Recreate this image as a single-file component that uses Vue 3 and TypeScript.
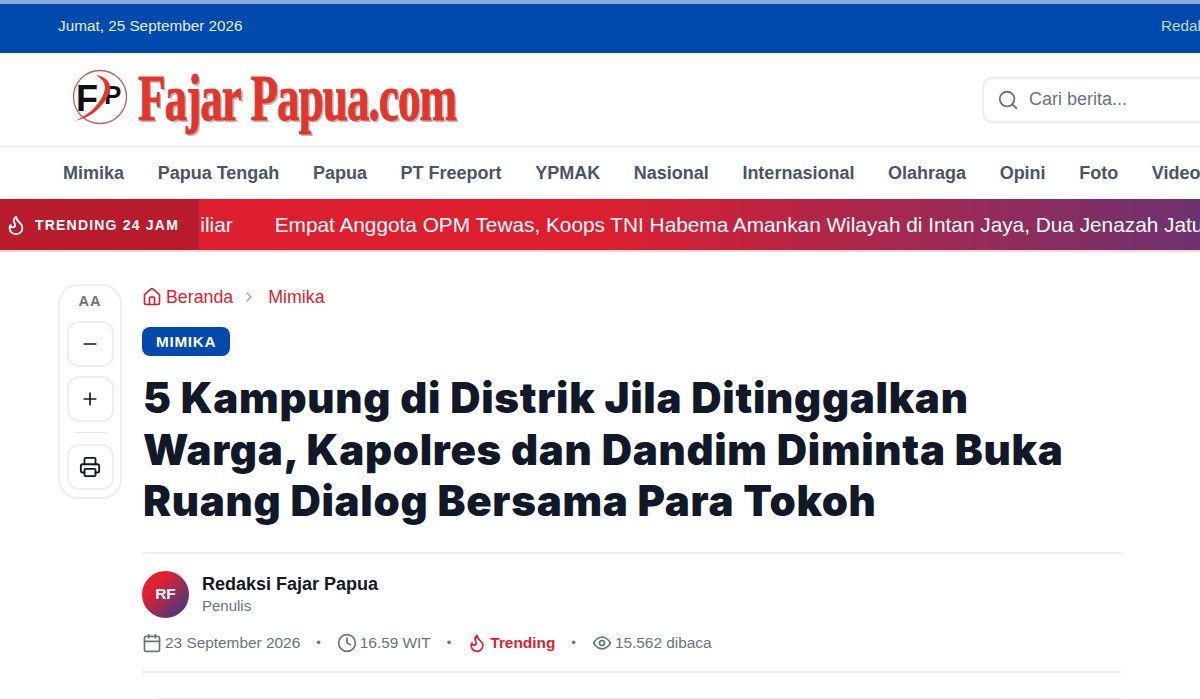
<template>
  <div class="page">
    <div class="topbar">
      <span class="topdate">Jumat, 25 September 2026</span>
      <span class="toplink">Redaksi</span>
    </div>

    <header class="header">
      <div class="logo">
        <svg class="logo-mark" viewBox="0 0 58 58" width="58" height="58" aria-hidden="true">
          <circle cx="29" cy="29" r="26.5" fill="none" stroke="#b9605c" stroke-width="1.3" />
          <text x="5" y="43" class="mark-f">F</text>
          <text x="33" y="36" class="mark-p">P</text>
          <path d="M25 7c7 1 13 5 14 11 1 8-6 18-14 25-6 5-13 8-21 10 8-4 15-8 20-14 7-8 12-17 9-24-1-3-4-5-8-8Z" fill="#e5352b" />
        </svg>
        <span class="logo-name">Fajar Papua.com</span>
      </div>
      <div class="search">
        <svg width="22" height="22" viewBox="0 0 24 24" fill="none" stroke="#6b7280" stroke-width="2" stroke-linecap="round">
          <circle cx="11" cy="11" r="8" />
          <path d="m21 21-4.3-4.3" />
        </svg>
        <span>Cari berita...</span>
      </div>
    </header>

    <nav class="nav">
      <a v-for="item in navItems" :key="item">{{ item }}</a>
    </nav>

    <div class="ticker">
      <div class="ticker-label">
        <svg width="22" height="22" viewBox="0 0 24 24" fill="none" stroke="#fff" stroke-width="2" stroke-linecap="round" stroke-linejoin="round">
          <path :d="flame" />
        </svg>
        <span>TRENDING 24 JAM</span>
      </div>
      <div class="ticker-track">
        <span class="ticker-prev">Miliar</span>
        <span>Empat Anggota OPM Tewas, Koops TNI Habema Amankan Wilayah di Intan Jaya, Dua Jenazah Jatuh</span>
      </div>
    </div>

    <main class="main">
      <aside class="tools">
        <span class="tools-label">AA</span>
        <button class="tool">
          <svg width="20" height="20" viewBox="0 0 24 24" fill="none" stroke="#111827" stroke-width="2" stroke-linecap="round"><path d="M5 12h14" /></svg>
        </button>
        <button class="tool">
          <svg width="20" height="20" viewBox="0 0 24 24" fill="none" stroke="#111827" stroke-width="2" stroke-linecap="round"><path d="M5 12h14M12 5v14" /></svg>
        </button>
        <div class="tools-sep"></div>
        <button class="tool">
          <svg width="22" height="22" viewBox="0 0 24 24" fill="none" stroke="#111827" stroke-width="2" stroke-linecap="round" stroke-linejoin="round">
            <path d="M6 18H4a2 2 0 0 1-2-2v-5a2 2 0 0 1 2-2h16a2 2 0 0 1 2 2v5a2 2 0 0 1-2 2h-2" />
            <path d="M6 9V3a1 1 0 0 1 1-1h10a1 1 0 0 1 1 1v6" />
            <rect x="6" y="14" width="12" height="8" rx="1" />
          </svg>
        </button>
      </aside>

      <article class="article">
        <div class="crumbs">
          <svg width="20" height="20" viewBox="0 0 24 24" fill="none" stroke="#dc1f2e" stroke-width="2" stroke-linecap="round" stroke-linejoin="round">
            <path d="M15 21v-8a1 1 0 0 0-1-1h-4a1 1 0 0 0-1 1v8" />
            <path d="M3 10a2 2 0 0 1 .7-1.5l7-6a2 2 0 0 1 2.6 0l7 6A2 2 0 0 1 21 10v9a2 2 0 0 1-2 2H5a2 2 0 0 1-2-2z" />
          </svg>
          <span class="crumb-home">Beranda</span>
          <svg class="crumb-sep" width="16" height="16" viewBox="0 0 24 24" fill="none" stroke="#9ca3af" stroke-width="2" stroke-linecap="round" stroke-linejoin="round"><path d="m9 18 6-6-6-6" /></svg>
          <span>Mimika</span>
        </div>
        <span class="badge">MIMIKA</span>
        <h1 class="title">5 Kampung di Distrik Jila Ditinggalkan<br />Warga, Kapolres dan Dandim Diminta Buka<br />Ruang Dialog Bersama Para Tokoh</h1>

        <div class="byline">
          <div class="author">
            <div class="avatar">RF</div>
            <div>
              <div class="author-name">Redaksi Fajar Papua</div>
              <div class="author-role">Penulis</div>
            </div>
          </div>
          <div class="meta">
            <span class="meta-item">
              <svg width="20" height="20" viewBox="0 0 24 24" fill="none" stroke="#6b7280" stroke-width="2" stroke-linecap="round" stroke-linejoin="round">
                <path d="M8 2v4M16 2v4" />
                <rect x="3" y="4" width="18" height="18" rx="2" />
                <path d="M3 10h18" />
              </svg>
              23 September 2026
            </span>
            <span class="dot">•</span>
            <span class="meta-item">
              <svg width="20" height="20" viewBox="0 0 24 24" fill="none" stroke="#6b7280" stroke-width="2" stroke-linecap="round" stroke-linejoin="round">
                <circle cx="12" cy="12" r="10" />
                <path d="M12 6v6l4 2" />
              </svg>
              16.59 WIT
            </span>
            <span class="dot">•</span>
            <span class="meta-item hot">
              <svg width="20" height="20" viewBox="0 0 24 24" fill="none" stroke="#dc1f2e" stroke-width="2" stroke-linecap="round" stroke-linejoin="round">
                <path :d="flame" />
              </svg>
              Trending
            </span>
            <span class="dot">•</span>
            <span class="meta-item">
              <svg width="20" height="20" viewBox="0 0 24 24" fill="none" stroke="#6b7280" stroke-width="2" stroke-linecap="round" stroke-linejoin="round">
                <path d="M2 12s3.600-7 10-7 10 7 10 7-3.600 7-10 7-10-7-10-7Z" />
                <circle cx="12" cy="12" r="3" />
              </svg>
              15.562 dibaca
            </span>
          </div>
        </div>
        <div class="next-line"></div>
      </article>
    </main>
  </div>
</template>

<script setup lang="ts">
const navItems: string[] = [
  "Mimika",
  "Papua Tengah",
  "Papua",
  "PT Freeport",
  "YPMAK",
  "Nasional",
  "Internasional",
  "Olahraga",
  "Opini",
  "Foto",
  "Video",
];

const flame =
  "M8.500 14.500A2.500 2.500 0 0 0 11 12c0-1.380-.5-2-1-3-1.072-2.143-.224-4.054 2-6 .5 2.500 2 4.900 4 6.500 2 1.600 3 3.500 3 5.500a7 7 0 1 1-14 0c0-1.153.433-2.294 1-3a2.500 2.500 0 0 0 2.500 2.500z";
</script>

<style scoped>
.page {
  width: 1200px;
  height: 699px;
  overflow: hidden;
  background: #fff;
  font-family: "Liberation Sans", Arial, sans-serif;
}

.topbar {
  height: 53px;
  box-sizing: border-box;
  border-top: 4px solid #8aaad9;
  background: #004aad;
  display: flex;
  align-items: center;
  justify-content: space-between;
  padding: 0 0 5px 58px;
  font-size: 15.300px;
  color: #e6eefb;
}
.toplink {
  width: 39px;
  overflow: hidden;
  color: #bfdbfe;
  white-space: nowrap;
}

.header {
  height: 93px;
  border-bottom: 1px solid #e5e7eb;
  display: flex;
  align-items: center;
  justify-content: space-between;
  padding-left: 71px;
}
.logo {
  display: flex;
  align-items: center;
  gap: 9px;
  margin-top: -6px;
}
.logo-mark {
  flex: none;
}
.mark-f,
.mark-p {
  font-family: "Liberation Sans", sans-serif;
  font-weight: 700;
  fill: #111;
}
.mark-f {
  font-size: 36px;
}
.mark-p {
  font-size: 26px;
}
.logo-name {
  font-family: "Liberation Serif", serif;
  font-weight: 700;
  font-size: 50px;
  line-height: 50px;
  color: #e5352b;
  letter-spacing: -1px;
  white-space: nowrap;
  -webkit-text-stroke: 0.7px #e5352b;
  text-shadow: 2px 2px 0 #b8b8b8;
  transform: scale(0.9, 1.33);
  transform-origin: left center;
  width: 310px;
}
.search {
  width: 260px;
  height: 46px;
  box-sizing: border-box;
  margin-right: -42px;
  border: 2px solid #eceef1;
  border-radius: 10px;
  display: flex;
  align-items: center;
  gap: 10px;
  padding-left: 13px;
  font-size: 18px;
  color: #6b7280;
}

.nav {
  height: 51px;
  padding-top: 1px;
  display: flex;
  align-items: center;
  gap: 33.600px;
  padding-left: 63px;
  font-size: 18px;
  font-weight: 700;
  color: #4b5563;
  white-space: nowrap;
}

.ticker {
  height: 51px;
  display: flex;
  overflow: hidden;
  border-bottom: 2px solid #f7d5d8;
  background: linear-gradient(90deg, #e01f2f 0%, #dc1f2f 50%, #6d3270 100%);
}
.ticker-label {
  flex: none;
  width: 199px;
  box-sizing: border-box;
  display: flex;
  align-items: center;
  gap: 8px;
  padding-left: 5px;
  background: #b91c2c;
  color: #fff;
  font-size: 14px;
  font-weight: 700;
  letter-spacing: 1.200px;
  white-space: nowrap;
}
.ticker-track {
  flex: 1;
  min-width: 0;
  overflow: hidden;
  display: flex;
  align-items: center;
  gap: 42px;
  font-size: 20.800px;
  color: #fff;
  white-space: nowrap;
}
.ticker-prev {
  margin-left: -16px;
}

.main {
  display: flex;
  align-items: flex-start;
  gap: 20px;
  padding: 32px 79px 0 58px;
}

.tools {
  flex: none;
  width: 64px;
  height: 215px;
  box-sizing: border-box;
  border: 2px solid #eeeff1;
  border-radius: 20px;
  display: flex;
  flex-direction: column;
  align-items: center;
  padding-top: 6px;
}
.tools-label {
  font-size: 14.500px;
  line-height: 18px;
  font-weight: 700;
  letter-spacing: 1px;
  color: #6b7280;
  margin-bottom: 11px;
}
.tool {
  width: 47px;
  height: 46px;
  flex: none;
  padding: 0;
  background: #fff;
  border: 2px solid #eeeff1;
  border-radius: 12px;
  display: flex;
  align-items: center;
  justify-content: center;
}
.tool + .tool {
  margin-top: 9px;
}
.tools-sep {
  width: 31px;
  height: 1px;
  background: #e5e7eb;
  margin: 10px 0 11px;
}

.article {
  flex: 1;
  min-width: 0;
}
.crumbs {
  display: flex;
  align-items: center;
  height: 26px;
  font-size: 17.800px;
  color: #dc1f2e;
}
.crumb-home {
  margin-left: 4px;
}
.crumb-sep {
  margin: 0 11px 0 8px;
}
.badge {
  display: inline-block;
  margin-top: 17px;
  padding: 0 14px;
  height: 29px;
  line-height: 29px;
  border-radius: 8px;
  background: #004aad;
  color: #fff;
  font-size: 15.300px;
  font-weight: 700;
  letter-spacing: 0.7px;
}
.title {
  margin: 16px 0 0 1px;
  font-family: Inter, "Liberation Sans", sans-serif;
  font-size: 42px;
  line-height: 51.500px;
  font-weight: 900;
  letter-spacing: 0.7px;
  color: #111827;
  white-space: nowrap;
}

.byline {
  margin-top: 25px;
  border-top: 2px solid #eeeff1;
  border-bottom: 2px solid #eeeff1;
  padding: 17px 0 17px;
}
.author {
  display: flex;
  align-items: center;
  gap: 13px;
}
.avatar {
  width: 47px;
  height: 47px;
  border-radius: 50%;
  background: linear-gradient(135deg, #e01f2f 30%, #28408f 100%);
  color: #fff;
  font-size: 15.500px;
  font-weight: 700;
  display: flex;
  align-items: center;
  justify-content: center;
}
.author-name {
  font-size: 18px;
  line-height: 24px;
  font-weight: 700;
  color: #111827;
}
.author-role {
  font-size: 15px;
  line-height: 20px;
  color: #6b7280;
}
.meta {
  margin-top: 14px;
  display: flex;
  align-items: center;
  gap: 16px;
  font-size: 15.400px;
  color: #6b7280;
  line-height: 22px;
}
.meta-item {
  display: flex;
  align-items: center;
  gap: 3px;
}
.dot {
  font-size: 13px;
}
.hot {
  color: #dc1f2e;
  font-weight: 700;
}
.next-line {
  margin: 24px 0 0 14px;
  border-top: 2px solid #f3f4f6;
}
</style>

<style>
html,
body {
  margin: 0;
  overflow: hidden;
}
</style>
